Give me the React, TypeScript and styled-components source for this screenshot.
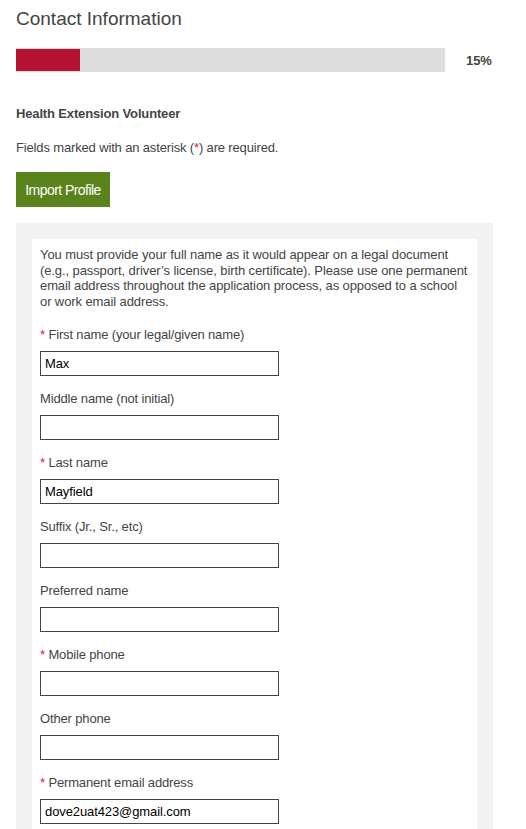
import React from "react";
import styled, { createGlobalStyle } from "styled-components";

const Global = createGlobalStyle`
  html, body { margin: 0; padding: 0; background: #fff; }
  body { font-family: "Liberation Sans", Arial, sans-serif; color: #444; }
  * { box-sizing: border-box; }
`;

const Page = styled.div`
  padding: 8px 33px 0 16px;
`;

const Title = styled.h1`
  margin: 0;
  font-size: 19px;
  line-height: 22px;
  font-weight: normal;
  color: #444;
`;

const ProgressRow = styled.div`
  display: flex;
  align-items: center;
  margin-top: 18px;
`;

const Track = styled.div`
  width: 429px;
  height: 24px;
  padding: 1px 0;
  background: #dddddd;
`;

const Fill = styled.div`
  height: 100%;
  background: #b71234;
`;

const Percent = styled.span`
  margin-left: 21px;
  font-size: 13px;
  line-height: 15px;
  font-weight: bold;
  color: #444;
  letter-spacing: -0.1px;
`;

const Subhead = styled.h2`
  margin: 34px 0 0;
  font-size: 13px;
  line-height: 15px;
  font-weight: bold;
  color: #444;
  letter-spacing: -0.15px;
`;

const Note = styled.p`
  margin: 19px 0 0;
  font-size: 13px;
  line-height: 15px;
  letter-spacing: -0.15px;
`;

const Star = styled.span`
  color: #e0201f;
`;

const ImportButton = styled.button`
  display: block;
  margin-top: 17px;
  height: 35px;
  width: 94px;
  padding: 0;
  border: none;
  background: #5b831b;
  color: #fff;
  font-family: "Liberation Sans", Arial, sans-serif;
  font-size: 14px;
  font-weight: normal;
  letter-spacing: -0.55px;
  text-align: center;
  cursor: pointer;
`;

const Panel = styled.section`
  margin-top: 16px;
  background: #f2f2f2;
  padding: 16px 16px 0;
`;

const Card = styled.div`
  background: #fff;
  padding: 8px 8px 40px;
`;

const Intro = styled.p`
  margin: 0 0 18px;
  font-size: 13px;
  line-height: 1.2;
  letter-spacing: -0.1px;
`;

const Field = styled.div`
  margin-top: 15px;
`;

const Label = styled.label`
  display: block;
  font-size: 13px;
  line-height: 15px;
  letter-spacing: -0.15px;
  margin-bottom: 9px;
  color: #444;
`;

const Input = styled.input`
  display: block;
  width: 239px;
  height: 25px;
  border: 1px solid #444;
  padding: 0 4px;
  font-family: "Liberation Sans", Arial, sans-serif;
  font-size: 13px;
  color: #000;
  background: #fff;
  outline: none;
  letter-spacing: -0.1px;
`;

type FieldDef = { label: string; required?: boolean; value?: string };

const fields: FieldDef[] = [
  { label: "First name (your legal/given name)", required: true, value: "Max" },
  { label: "Middle name (not initial)" },
  { label: "Last name", required: true, value: "Mayfield" },
  { label: "Suffix (Jr., Sr., etc)" },
  { label: "Preferred name" },
  { label: "Mobile phone", required: true },
  { label: "Other phone" },
  { label: "Permanent email address", required: true, value: "dove2uat423@gmail.com" },
];

export default function App() {
  const progress = 15;
  return (
    <>
      <Global />
      <Page>
        <Title>Contact Information</Title>
        <ProgressRow>
          <Track>
            <Fill style={{ width: `${progress}%` }} />
          </Track>
          <Percent>{progress}%</Percent>
        </ProgressRow>
        <Subhead>Health Extension Volunteer</Subhead>
        <Note>
          Fields marked with an asterisk (<Star>*</Star>) are required.
        </Note>
        <ImportButton type="button">Import Profile</ImportButton>
        <Panel>
          <Card>
            <Intro>
              You must provide your full name as it would appear on a legal document
              (e.g., passport, driver’s license, birth certificate). Please use one
              permanent email address throughout the application process, as opposed
              to a school or work email address.
            </Intro>
            {fields.map((f, i) => (
              <Field key={i}>
                <Label htmlFor={`f${i}`}>
                  {f.required && <Star>* </Star>}
                  {f.label}
                </Label>
                <Input id={`f${i}`} type="text" defaultValue={f.value ?? ""} />
              </Field>
            ))}
          </Card>
        </Panel>
      </Page>
    </>
  );
}
